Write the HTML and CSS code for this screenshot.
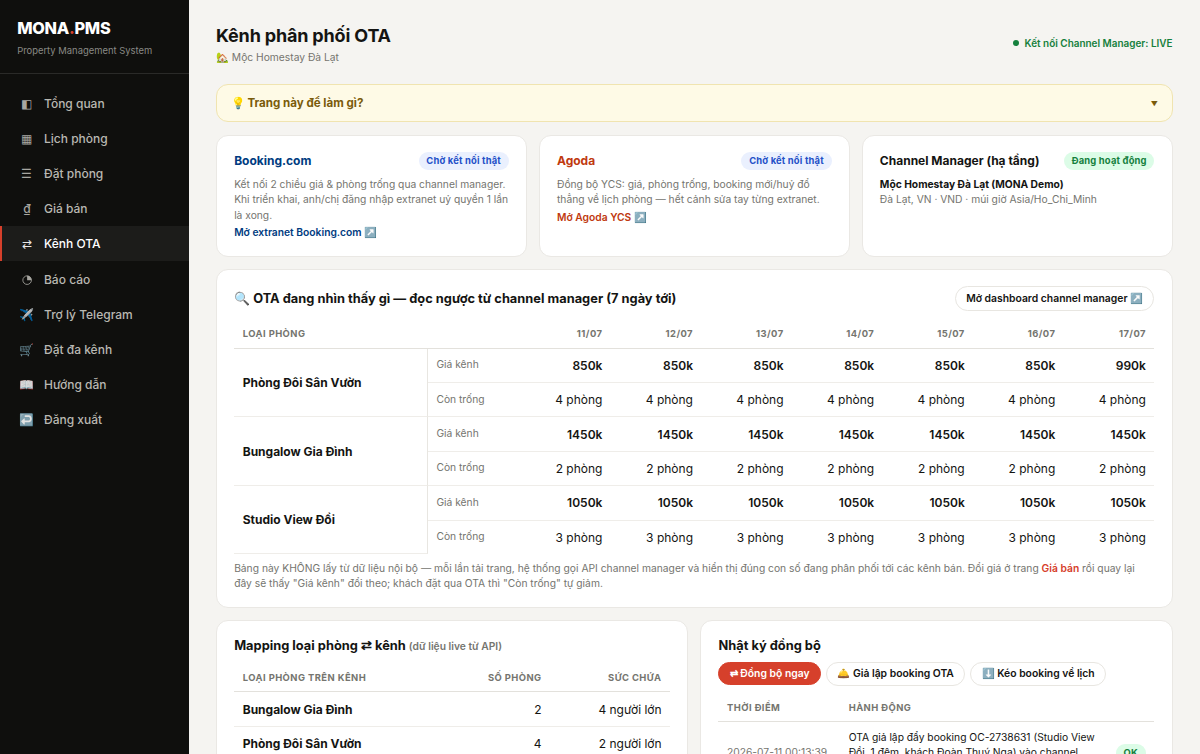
FILE: index.html
```html
<!DOCTYPE html>
<html lang="vi">
<head>
  <meta charset="UTF-8">
  <title>Kênh phân phối OTA</title>
  <meta name="viewport" content="width=device-width, initial-scale=1.0">
  <link rel="stylesheet" href="styles.css">
</head>
<body>
  <div class="layout">
    <aside class="sidebar">
      <div class="brand">
        <div class="logo">MONA<span>.</span>PMS</div>
        <div class="tagline">Property Management System</div>
      </div>
      <nav class="nav">
        <a href="#"><span class="ico">◧</span>Tổng quan</a>
        <a href="#"><span class="ico">▦</span>Lịch phòng</a>
        <a href="#"><span class="ico">☰</span>Đặt phòng</a>
        <a href="#"><span class="ico">₫</span>Giá bán</a>
        <a href="#" class="active"><span class="ico">⇄</span>Kênh OTA</a>
        <a href="#"><span class="ico"><svg viewBox="0 0 12 12" width="12" height="12"><circle cx="6" cy="6" r="5" fill="none" stroke="currentColor"/><path d="M6 1v5h5a5 5 0 0 0-5-5z" fill="currentColor"/></svg></span>Báo cáo</a>
        <a href="#"><span class="ico">✈️</span>Trợ lý Telegram</a>
        <a href="#"><span class="ico">🛒</span>Đặt đa kênh</a>
        <a href="#"><span class="ico">📖</span>Hướng dẫn</a>
        <a href="#"><span class="ico">↩️</span>Đăng xuất</a>
      </nav>
    </aside>

    <main class="main">
      <header class="topbar">
        <div>
          <h1>Kênh phân phối OTA</h1>
          <div class="sub">🏡 Mộc Homestay Đà Lạt</div>
        </div>
        <div class="live"><span class="dot"></span>Kết nối Channel Manager: LIVE</div>
      </header>

      <div class="help"><span>💡 Trang này để làm gì?</span><span class="caret">▼</span></div>

      <section class="grid3">
        <div class="card">
          <div class="card-head"><h3 class="booking">Booking.com</h3><span class="badge blue">Chờ kết nối thật</span></div>
          <p class="muted">Kết nối 2 chiều giá &amp; phòng trống qua channel manager. Khi triển khai, anh/chị đăng nhập extranet uỷ quyền 1 lần là xong.</p>
          <a href="#" class="ext booking">Mở extranet Booking.com ↗️</a>
        </div>
        <div class="card">
          <div class="card-head"><h3 class="agoda">Agoda</h3><span class="badge blue">Chờ kết nối thật</span></div>
          <p class="muted">Đồng bộ YCS: giá, phòng trống, booking mới/huỷ đổ thẳng về lịch phòng — hết cảnh sửa tay từng extranet.</p>
          <a href="#" class="ext agoda">Mở Agoda YCS ↗️</a>
        </div>
        <div class="card">
          <div class="card-head"><h3>Channel Manager (hạ tầng)</h3><span class="badge green">Đang hoạt động</span></div>
          <p class="muted"><b>Mộc Homestay Đà Lạt (MONA Demo)</b><br>Đà Lạt, VN · VND · múi giờ Asia/Ho_Chi_Minh</p>
        </div>
      </section>

      <section class="card ota">
        <div class="card-head">
          <h3>🔍 OTA đang nhìn thấy gì — đọc ngược từ channel manager (7 ngày tới)</h3>
          <a href="#" class="btn big">Mở dashboard channel manager ↗️</a>
        </div>
        <table class="rates">
          <colgroup><col class="c-room"><col class="c-label"><col><col><col><col><col><col><col></colgroup>
          <thead>
            <tr><th>Loại phòng</th><th></th><th class="num">11/07</th><th class="num">12/07</th><th class="num">13/07</th><th class="num">14/07</th><th class="num">15/07</th><th class="num">16/07</th><th class="num">17/07</th></tr>
          </thead>
          <tbody>
            <tr class="price"><td rowspan="2" class="room">Phòng Đôi Sân Vườn</td><td class="label">Giá kênh</td><td>850k</td><td>850k</td><td>850k</td><td>850k</td><td>850k</td><td>850k</td><td>990k</td></tr>
            <tr><td class="label">Còn trống</td><td>4 phòng</td><td>4 phòng</td><td>4 phòng</td><td>4 phòng</td><td>4 phòng</td><td>4 phòng</td><td>4 phòng</td></tr>
            <tr class="price"><td rowspan="2" class="room">Bungalow Gia Đình</td><td class="label">Giá kênh</td><td>1450k</td><td>1450k</td><td>1450k</td><td>1450k</td><td>1450k</td><td>1450k</td><td>1450k</td></tr>
            <tr><td class="label">Còn trống</td><td>2 phòng</td><td>2 phòng</td><td>2 phòng</td><td>2 phòng</td><td>2 phòng</td><td>2 phòng</td><td>2 phòng</td></tr>
            <tr class="price"><td rowspan="2" class="room">Studio View Đồi</td><td class="label">Giá kênh</td><td>1050k</td><td>1050k</td><td>1050k</td><td>1050k</td><td>1050k</td><td>1050k</td><td>1050k</td></tr>
            <tr><td class="label">Còn trống</td><td>3 phòng</td><td>3 phòng</td><td>3 phòng</td><td>3 phòng</td><td>3 phòng</td><td>3 phòng</td><td>3 phòng</td></tr>
          </tbody>
        </table>
        <p class="muted note">Bảng này KHÔNG lấy từ dữ liệu nội bộ — mỗi lần tải trang, hệ thống gọi API channel manager và hiển thị đúng con số đang phân phối tới các kênh bán. Đổi giá ở trang <a href="#">Giá bán</a> rồi quay lại đây sẽ thấy "Giá kênh" đổi theo; khách đặt qua OTA thì "Còn trống" tự giảm.</p>
      </section>

      <section class="grid2">
        <div class="card">
          <h3>Mapping loại phòng ⇄ kênh <small>(dữ liệu live từ API)</small></h3>
          <table class="mapping">
            <colgroup><col><col class="c-count"><col class="c-cap"></colgroup>
            <thead>
              <tr><th>Loại phòng trên kênh</th><th class="num">Số phòng</th><th class="num">Sức chứa</th></tr>
            </thead>
            <tbody>
              <tr><td class="name">Bungalow Gia Đình</td><td class="num">2</td><td class="num">4 người lớn</td></tr>
              <tr><td class="name">Phòng Đôi Sân Vườn</td><td class="num">4</td><td class="num">2 người lớn</td></tr>
            </tbody>
          </table>
        </div>
        <div class="card">
          <h3>Nhật ký đồng bộ</h3>
          <div class="actions">
            <a href="#" class="btn primary">⇄ Đồng bộ ngay</a>
            <a href="#" class="btn">🛎️ Giả lập booking OTA</a>
            <a href="#" class="btn">⬇️ Kéo booking về lịch</a>
          </div>
          <table class="log">
            <colgroup><col class="c-time"><col><col class="c-status"></colgroup>
            <thead>
              <tr><th>Thời điểm</th><th>Hành động</th><th></th></tr>
            </thead>
            <tbody>
              <tr><td class="time">2026-07-11 00:13:39</td><td>OTA giả lập đẩy booking OC-2738631 (Studio View Đồi, 1 đêm, khách Đoàn Thuý Nga) vào channel manager</td><td><span class="badge green">OK</span></td></tr>
            </tbody>
          </table>
        </div>
      </section>
    </main>
  </div>
</body>
</html>
```
FILE: styles.css
```css
* {
  margin: 0;
  padding: 0;
  box-sizing: border-box;
}

html {
  overflow: hidden;
}

/* compact scale: 1400px layout on a 1200px window */
body {
  zoom: 0.857143;
  width: 1400px;
  height: 879.6px;
  overflow: hidden;
  font-family: Inter, "Noto Sans", sans-serif;
  font-size: 14px;
  line-height: 1.5;
  color: #141412;
  background: #f5f4f1;
}

a {
  color: inherit;
  text-decoration: none;
}

.layout {
  display: flex;
  height: 100%;
}

/* Sidebar */
.sidebar {
  width: 220px;
  flex-shrink: 0;
  background: #0f0f0d;
  color: #fff;
}

.brand {
  height: 86px;
  padding: 19px 20px 0;
  border-bottom: 1px solid #2a2a28;
}

.logo {
  font-size: 19px;
  font-weight: 800;
  letter-spacing: -0.3px;
}

.logo span {
  color: #d6402b;
}

.tagline {
  margin-top: 4px;
  font-size: 11px;
  color: #8a8a85;
}

.nav {
  padding-top: 14px;
}

.nav a {
  display: flex;
  align-items: center;
  gap: 11px;
  height: 41px;
  padding: 1.5px 20px 0;
  border-left: 3px solid transparent;
  font-weight: 500;
  color: #b9b8b2;
}

.nav .active {
  background: #1c1c1a;
  border-left-color: #d6402b;
  color: #fff;
}

.ico {
  width: 18px;
  text-align: center;
  white-space: nowrap;
  opacity: 0.9;
}

.ico svg {
  display: inline-block;
  vertical-align: -2px;
}

/* Main */
.main {
  flex: 1;
  min-width: 0;
  padding: 26px 32px 0;
}

.topbar {
  display: flex;
  justify-content: space-between;
  height: 72px;
}

h1 {
  padding-top: 1px;
  font-size: 21px;
  line-height: 30px;
  font-weight: 700;
  letter-spacing: -0.2px;
}

.sub {
  font-size: 12px;
  line-height: 19px;
  color: #75756f;
}

.live {
  display: flex;
  align-items: center;
  gap: 6px;
  height: 49px;
  font-size: 11.6px;
  font-weight: 600;
  color: #15803d;
}

.dot {
  width: 7px;
  height: 7px;
  border-radius: 50%;
  background: #15803d;
}

.help {
  display: flex;
  justify-content: space-between;
  align-items: center;
  height: 44px;
  margin-bottom: 16px;
  padding: 1px 16px 0;
  border: 1px solid #f0e4b0;
  border-radius: 14px;
  background: #fefae6;
  font-size: 13.5px;
  font-weight: 700;
  color: #7a5b0b;
}

.caret {
  padding-top: 1px;
  font-size: 8px;
}

.card {
  padding: 18px 20px;
  background: #fff;
  border: 1px solid #eae8e4;
  border-radius: 14px;
}

.grid3,
.grid2 {
  display: grid;
  gap: 14px;
}

.grid3 {
  grid-template-columns: repeat(3, 1fr);
}

.grid2 {
  grid-template-columns: repeat(2, 1fr);
}

.card-head {
  display: flex;
  justify-content: space-between;
  align-items: center;
}

.grid3 .card {
  height: 142px;
}

.grid3 .card-head {
  height: 22px;
  margin-bottom: 7px;
}

h3 {
  font-size: 15px;
  font-weight: 700;
}

.grid3 h3 {
  font-size: 14px;
}

h3 small {
  font-size: 12px;
  font-weight: 600;
  color: #75756f;
}

.badge {
  display: inline-block;
  padding: 2px 9px;
  border-radius: 99px;
  font-size: 11px;
  line-height: 17px;
  font-weight: 700;
  letter-spacing: 0.2px;
}

.badge.blue {
  background: #eaf0fe;
  color: #2450c8;
}

.badge.green {
  background: #dcfce7;
  color: #15803d;
}

.muted {
  font-size: 12px;
  color: #75756f;
}

.muted b {
  color: #141412;
}

.ext {
  display: block;
  margin-top: 3px;
  font-size: 12px;
  line-height: 18px;
  font-weight: 600;
}

.booking {
  color: #003b80;
}

.agoda {
  color: #c0390f;
}

.btn {
  display: inline-flex;
  align-items: center;
  height: 27.5px;
  padding: 0 12px;
  border: 1px solid #e8e6e1;
  border-radius: 99px;
  font-size: 12.1px;
  font-weight: 600;
  white-space: nowrap;
}

.btn.big {
  height: 30px;
}

.btn.primary {
  height: 26px;
  border-color: #d6402b;
  background: #d6402b;
  color: #fff;
}

.ota {
  margin: 14px 0;
}

.ota .card-head {
  margin-bottom: 8px;
}

/* Tables */
table {
  width: 100%;
  table-layout: fixed;
  border-collapse: separate;
  border-spacing: 0;
}

th,
td {
  padding: 9.5px 10px 8.5px;
  border-bottom: 1px solid #efede9;
  text-align: left;
}

th {
  height: 35.5px;
  padding: 10px 10px 8px;
  border-bottom-color: #e3e1dc;
  font-size: 11px;
  font-weight: 700;
  letter-spacing: 0.5px;
  text-transform: uppercase;
  color: #75756f;
}

tbody tr:last-child td {
  border-bottom: none;
}

.num,
.rates td {
  text-align: right;
}

.rates tr .room {
  border-right: 1px solid #e8e6e1;
  border-bottom: 1px solid #efede9;
  text-align: left;
  font-weight: 700;
}

.rates .label {
  padding-top: 10px;
  text-align: left;
  vertical-align: top;
  font-size: 12px;
  font-weight: 400;
  color: #75756f;
}

.price td {
  font-weight: 600;
}

.name {
  font-weight: 700;
}

.c-room {
  width: 226px;
}

.c-label {
  width: 108px;
}

.note {
  margin-top: 8px;
  padding-right: 8px;
  letter-spacing: 0.01px;
}

.note a {
  font-weight: 600;
  color: #d6402b;
}

.grid2 .card {
  padding-top: 17px;
}

.mapping {
  margin-top: 8px;
}

.mapping th,
.log th {
  padding-top: 11px;
  padding-bottom: 7px;
}

.c-count {
  width: 130px;
}

.c-cap {
  width: 140px;
}

.actions {
  display: flex;
  align-items: flex-start;
  gap: 6px;
  margin-top: 8.5px;
}

.log {
  margin-top: 6.5px;
}

.log td {
  padding-top: 9px;
  font-size: 12px;
}

.log .time {
  color: #75756f;
  white-space: nowrap;
}

.c-time {
  width: 142px;
}

.c-status {
  width: 55px;
}
```
